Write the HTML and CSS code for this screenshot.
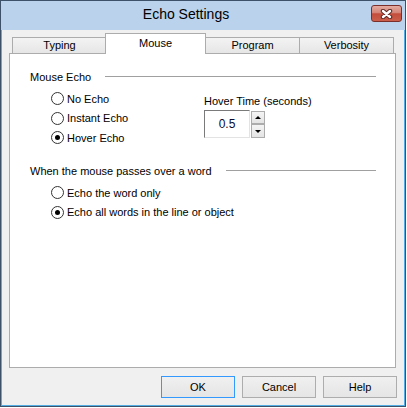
FILE: index.html
```html
<!DOCTYPE html>
<html>
<head>
<meta charset="utf-8">
<link rel="stylesheet" href="styles.css">
</head>
<body>
<div class="window">
  <div class="titlebar">
    <div class="title">Echo Settings</div>
    <div class="close">
      <svg width="13" height="10" viewBox="0 0 13 10">
        <path d="M3 2 L10 8 M10 2 L3 8" stroke="#5a2a26" stroke-width="4.4" stroke-linecap="round" fill="none"/>
        <path d="M3 2 L10 8 M10 2 L3 8" stroke="#ffffff" stroke-width="2.4" stroke-linecap="round" fill="none"/>
      </svg>
    </div>
  </div>
  <div class="client">
    <div class="tabs">
      <div class="tab">Typing</div>
      <div class="tab sel">Mouse</div>
      <div class="tab next">Program</div>
      <div class="tab next">Verbosity</div>
    </div>
    <div class="panel">
      <div class="group-head"><span>Mouse Echo</span><span class="rule"></span></div>
      <div class="echo-body">
        <div class="radios">
          <div class="radio"><span class="circle"></span>No Echo</div>
          <div class="radio"><span class="circle"></span>Instant Echo</div>
          <div class="radio"><span class="circle on"></span>Hover Echo</div>
        </div>
        <div class="hover">
          <div class="hover-label">Hover Time (seconds)</div>
          <div class="spin-row">
            <div class="edit">0.5</div>
            <div class="spinner">
              <div class="sbtn up"><span class="tri-up"></span></div>
              <div class="sbtn down"><span class="tri-down"></span></div>
            </div>
          </div>
        </div>
      </div>
      <div class="group-head g2"><span>When the mouse passes over a word</span><span class="rule"></span></div>
      <div class="radios r2">
        <div class="radio"><span class="circle"></span>Echo the word only</div>
        <div class="radio"><span class="circle on"></span>Echo all words in the line or object</div>
      </div>
    </div>
    <div class="buttons">
      <div class="btn def">OK</div>
      <div class="btn">Cancel</div>
      <div class="btn">Help</div>
    </div>
  </div>
</div>
</body>
</html>
```
FILE: styles.css
```css
body {
  margin: 0;
  background: #ffffff;
  font-family: "Liberation Sans", Arial, sans-serif;
  font-size: 11px;
  color: #000;
}
.window {
  width: 406px;
  height: 407px;
  box-sizing: border-box;
  border: 1px solid #3d5269;
  display: flex;
  flex-direction: column;
  background: #f0f0f0;
}
.titlebar {
  height: 29px;
  flex: none;
  background: #bad2eb;
  display: flex;
  align-items: flex-start;
}
.title {
  flex: 1;
  text-align: center;
  font-size: 14px;
  line-height: 27px;
}
.close {
  width: 31px;
  height: 17px;
  box-sizing: border-box;
  margin: 4px 3px 0 0;
  border: 1px solid #7a2f2a;
  border-radius: 3px;
  background: linear-gradient(#e4aba1, #d58477 45%, #c34d3c 52%, #cb5f4c);
  display: flex;
  align-items: center;
  justify-content: center;
}
.client {
  flex: 1;
  border: 1px solid #54aee3;
  border-top: 0;
  padding: 3px 7px 0 7px;
  display: flex;
  flex-direction: column;
}
.tabs {
  display: flex;
  align-items: flex-end;
  height: 20px;
  padding-left: 3px;
}
.tab {
  width: 93px;
  height: 15px;
  border: 1px solid #acacac;
  border-bottom: 0;
  background: linear-gradient(#f3f3f3, #e6e6e6);
  text-align: center;
  line-height: 14px;
  flex: none;
}
.tab.next {
  margin-left: -1px;
}
.tab.sel {
  width: 99px;
  height: 20px;
  line-height: 18px;
  margin-left: -2px;
  margin-bottom: -1px;
  background: #ffffff;
  position: relative;
  z-index: 1;
}
.panel {
  width: 387px;
  height: 315px;
  box-sizing: border-box;
  border: 1px solid #acacac;
  background: #ffffff;
  padding-top: 17px;
}
.group-head {
  display: flex;
  align-items: center;
  height: 13px;
  line-height: 13px;
  padding: 0 19px 0 20px;
}
.rule {
  flex: 1;
  height: 1px;
  background: #a0a0a0;
  margin-left: 14px;
  margin-bottom: 2px;
}
.echo-body {
  display: flex;
  margin-top: 5px;
}
.radios {
  flex: none;
  width: 153px;
  padding-left: 41px;
}
.r2 {
  width: 300px;
  margin-top: 5px;
}
.g2 {
  margin-top: 17.5px;
}
.radio {
  height: 19.5px;
  display: flex;
  align-items: center;
  white-space: nowrap;
}
.circle {
  width: 13px;
  height: 13px;
  box-sizing: border-box;
  border: 1px solid #333333;
  border-radius: 50%;
  background: #ffffff;
  margin-right: 3px;
  display: flex;
  align-items: center;
  justify-content: center;
  flex: none;
}
.circle.on::after {
  content: "";
  width: 5px;
  height: 5px;
  border-radius: 50%;
  background: #000;
}
.hover {
  margin-top: 6px;
}
.hover-label {
  line-height: 13px;
}
.spin-row {
  display: flex;
  margin-top: 2px;
}
.edit {
  width: 46px;
  height: 28px;
  box-sizing: border-box;
  border: 1px solid;
  border-color: #7a7a7a #e3e3e3 #e3e3e3 #7a7a7a;
  background: #ffffff;
  display: flex;
  align-items: center;
  justify-content: center;
  font-size: 12px;
  color: #0a0a30;
}
.spinner {
  margin: 1px 0 0 1px;
  width: 14px;
  display: flex;
  flex-direction: column;
}
.sbtn {
  box-sizing: border-box;
  border: 1px solid #acacac;
  background: linear-gradient(#f4f4f4, #e4e4e4);
  display: flex;
  align-items: center;
  justify-content: center;
}
.up {
  height: 13px;
}
.down {
  height: 14px;
}
.tri-up {
  width: 0;
  height: 0;
  border-left: 3px solid transparent;
  border-right: 3px solid transparent;
  border-bottom: 3px solid #000;
}
.tri-down {
  width: 0;
  height: 0;
  border-left: 3px solid transparent;
  border-right: 3px solid transparent;
  border-top: 3px solid #000;
}
.buttons {
  display: flex;
  justify-content: flex-end;
  gap: 7px;
  margin-top: 8px;
}
.btn {
  width: 74px;
  height: 22px;
  box-sizing: border-box;
  border: 1px solid #adadad;
  background: linear-gradient(#f0f0f0, #e5e5e5);
  display: flex;
  align-items: center;
  justify-content: center;
}
.btn.def {
  border-color: #3399ff;
}
```
